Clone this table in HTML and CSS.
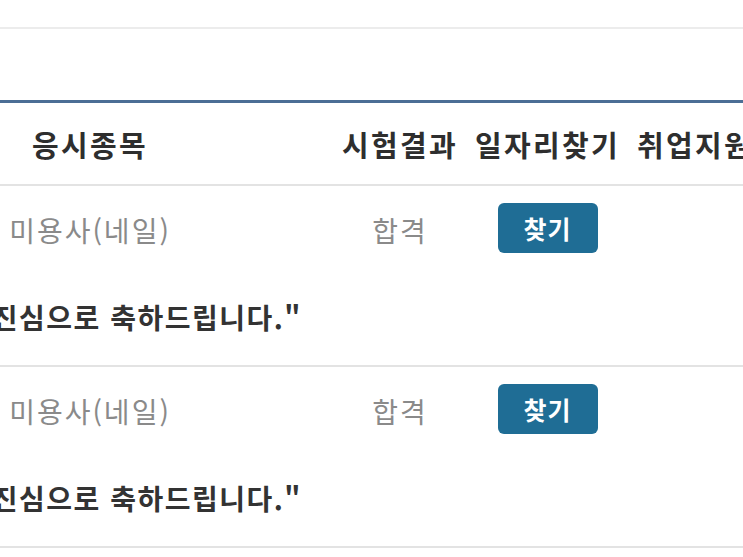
FILE: index.html
```html
<!DOCTYPE html>
<html lang="ko">
<head>
<meta charset="utf-8">
<title>합격자 조회</title>
<link rel="stylesheet" href="styles.css">
</head>
<body>
<div class="page">
  <div class="topbar"></div>
  <div class="table">
    <div class="row head">
      <div class="cell c-item">응시종목</div>
      <div class="cell c-result">시험결과</div>
      <div class="cell c-job">일자리찾기</div>
      <div class="cell c-support">취업지원</div>
    </div>
    <div class="group">
      <div class="row data">
        <div class="cell c-item">미용사(네일)</div>
        <div class="cell c-result">합격</div>
        <div class="cell c-job"><button class="btn" type="button">찾기</button></div>
        <div class="cell c-support"></div>
      </div>
      <p class="msg">"합격을 진심으로 축하드립니다."</p>
    </div>
    <div class="group">
      <div class="row data">
        <div class="cell c-item">미용사(네일)</div>
        <div class="cell c-result">합격</div>
        <div class="cell c-job"><button class="btn" type="button">찾기</button></div>
        <div class="cell c-support"></div>
      </div>
      <p class="msg">"합격을 진심으로 축하드립니다."</p>
    </div>
  </div>
</div>
</body>
</html>
```
FILE: styles.css
```css
html, body {
  margin: 0;
  padding: 0;
  background: #ffffff;
  overflow: hidden;
}
body {
  font-family: "Noto Sans CJK KR", "Noto Sans", sans-serif;
  color: #333333;
}
.page {
  width: 743px;
  height: 557px;
  overflow: hidden;
}
.topbar {
  height: 27px;
  border-bottom: 2px solid #ececec;
  margin-bottom: 71px;
}
.table {
  border-top: 3px solid #4b6e95;
  width: 900px;
}
.row {
  display: grid;
  grid-template-columns: 180px 160px 120px 175px 120px;
  align-items: center;
}
.cell {
  text-align: center;
  white-space: nowrap;
}
.c-item { grid-column: 1; }
.c-result { grid-column: 3; }
.c-job { grid-column: 4; }
.c-support { grid-column: 5; }
.head {
  height: 81px;
  border-bottom: 2px solid #e3e3e3;
  font-size: 29px;
  font-weight: 700;
  letter-spacing: 2.3px;
  color: #2e2e2e;
}
.data {
  height: 88px;
  font-size: 28px;
  color: #8a8a8a;
  letter-spacing: 2px;
}
.group {
  border-bottom: 2px solid #e3e3e3;
}
.btn {
  width: 100px;
  height: 50px;
  margin-top: -4px;
  border: 0;
  border-radius: 6px;
  background: #1f6d95;
  color: #ffffff;
  font-family: inherit;
  font-size: 25px;
  font-weight: 700;
  letter-spacing: 1px;
  padding: 0;
}
.msg {
  margin: 0;
  height: 91px;
  line-height: 86px;
  font-size: 28px;
  font-weight: 700;
  letter-spacing: 1.5px;
  color: #333333;
  text-indent: -117px;
  white-space: nowrap;
}
```
